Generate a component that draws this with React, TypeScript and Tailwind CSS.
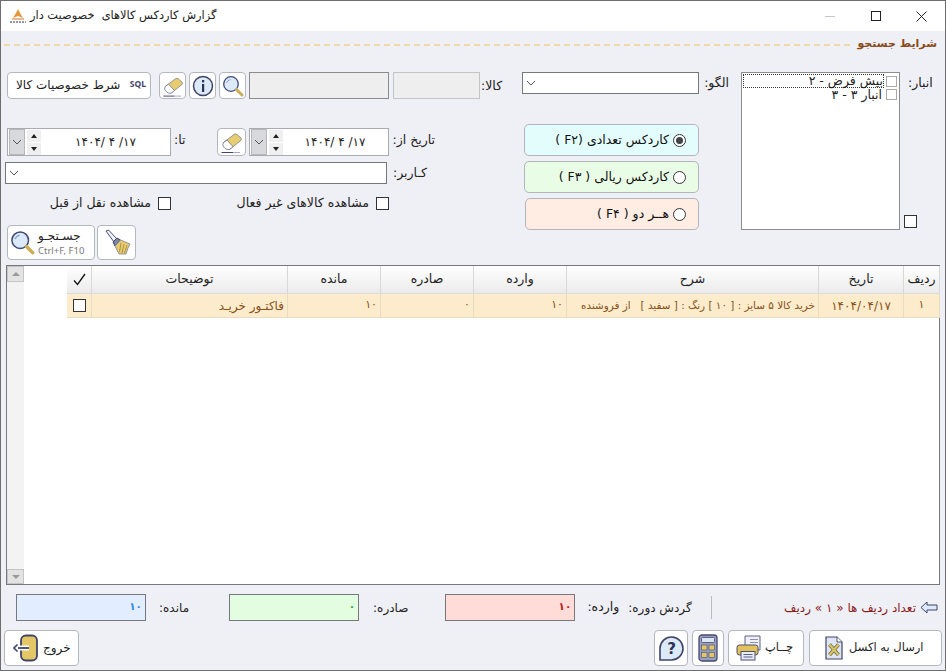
import type { ReactNode } from 'react';

const Eraser = () => (
  <svg width="26" height="24" viewBox="0 0 26 24">
    <path d="M5.500 12.500 L16 4.500 Q17.500 3.500 19 4.500 L23 8 Q24 9.500 22.500 10.800 L11.500 19.500 Z" fill="#e8cc70" stroke="#7a7d96" strokeWidth="0.800" />
    <path d="M5.500 12.500 L9 10 L15 16.700 L11.500 19.500 L9 19.500 Q7 19 5 16 Q4.500 14 5.500 12.500 Z" fill="#fff" stroke="#6b6f8c" strokeWidth="0.800" />
    <path d="M3.500 22.500 H15" stroke="#3f4468" strokeWidth="1" />
    <path d="M15 22.500 H22" stroke="#a5a9c2" strokeWidth="1" />
  </svg>
);

const Magnifier = ({ size = 22 }: { size?: number }) => (
  <svg width={size} height={size} viewBox="0 0 22 22">
    <circle cx="9" cy="9" r="7.300" fill="#dbe9f8" stroke="#3f4a78" strokeWidth="1.300" />
    <path d="M4.500 8 Q5.500 5 8.500 4.500" fill="none" stroke="#8da6c8" strokeWidth="1" />
    <path d="M14.500 14.500 L20 20" stroke="#c9ad57" strokeWidth="3" strokeLinecap="round" />
  </svg>
);

const Brush = () => (
  <svg width="30" height="30" viewBox="0 0 30 30">
    <path d="M4 3 L6.500 2 L15 11 L12 14 Z" fill="#eef1f7" stroke="#4a4f75" strokeWidth="1" />
    <path d="M11 14 L15 10 L18.500 12 L13 18 Z" fill="#7d83a8" stroke="#3f4468" strokeWidth="1" />
    <path d="M13 18 L18.500 12 L28 16 L26 20 L24 26 L17 26 Z" fill="#e8cc70" stroke="#7a7d96" strokeWidth="0.800" />
    <path d="M19 15 L17.500 24 M22 16 L20 25 M25 17 L22.500 25" stroke="#a88f3f" strokeWidth="0.900" />
  </svg>
);

const Exit = () => (
  <svg width="26" height="28" viewBox="0 0 26 28">
    <rect x="8" y="1.500" width="16" height="25" rx="5" fill="#e3c766" stroke="#3f4468" strokeWidth="1.800" />
    <path d="M5 14 H16" stroke="#fff" strokeWidth="5" />
    <path d="M5 14 H16" stroke="#3f4468" strokeWidth="1.800" />
    <path d="M4.500 10.500 L1 14 L4.500 17.500" fill="none" stroke="#3f4468" strokeWidth="1.600" />
  </svg>
);

const Excel = () => (
  <svg width="18" height="24" viewBox="0 0 18 24">
    <path d="M1 1 H12 L17 6 V23 H1 Z" fill="#dfe5f2" stroke="#3f4468" strokeWidth="1.200" />
    <path d="M12 1 V6 H17" fill="#fff" stroke="#3f4468" strokeWidth="0.900" />
    <path d="M4.500 8.500 L13.500 19 M13.500 8.500 L4.500 19" stroke="#6f6a3a" strokeWidth="3.600" />
    <path d="M4.500 8.500 L13.500 19 M13.500 8.500 L4.500 19" stroke="#d8c468" strokeWidth="2.200" />
  </svg>
);

const Printer = () => (
  <svg width="26" height="26" viewBox="0 0 26 26">
    <path d="M9 1 H24 V15 H9 Z" fill="#eef0f6" stroke="#5d6285" strokeWidth="1" />
    <path d="M14 4.500 H22 M14 7.500 H22" stroke="#8d91ad" strokeWidth="1" />
    <rect x="1" y="10" width="21" height="10" rx="2.500" fill="#e3c25a" stroke="#4a4f75" strokeWidth="1" />
    <rect x="5" y="16.500" width="14" height="8.500" fill="#e6ebf5" stroke="#4a4f75" strokeWidth="1" />
    <path d="M7.500 19.500 H16.500 M7.500 22 H16.500" stroke="#5d6285" strokeWidth="1" />
  </svg>
);

const Calc = () => (
  <svg width="20" height="28" viewBox="0 0 20 28">
    <rect x="1" y="1" width="18" height="26" rx="3" fill="#9aa0bf" stroke="#454a70" strokeWidth="1.300" />
    <rect x="3.500" y="3.500" width="13" height="5" rx="1" fill="#dce6f4" stroke="#454a70" strokeWidth="0.800" />
    <rect x="3.500" y="11" width="5.500" height="5" fill="#e3c766" stroke="#454a70" strokeWidth="0.600" />
    <rect x="11" y="11" width="5.500" height="5" fill="#e3c766" stroke="#454a70" strokeWidth="0.600" />
    <rect x="3.500" y="18.500" width="5.500" height="5" fill="#e3c766" stroke="#454a70" strokeWidth="0.600" />
    <rect x="11" y="18.500" width="5.500" height="5" fill="#e3c766" stroke="#454a70" strokeWidth="0.600" />
  </svg>
);

const Help = () => (
  <svg width="27" height="27" viewBox="0 0 27 27">
    <path d="M2 25 V13 A11.500 11.500 0 1 1 13.500 25 Z" fill="#dbe9f8" stroke="#3f4468" strokeWidth="1.600" />
    <text x="13.500" y="19" textAnchor="middle" fontSize="15" fontWeight="700" fill="#2d3157">?</text>
  </svg>
);

const Chevron = () => (
  <svg width="10" height="6" viewBox="0 0 10 6">
    <path d="M1 1 L5 5 L9 1" fill="none" stroke="#555" strokeWidth="1" />
  </svg>
);

const Check = ({ className = '' }: { className?: string }) => (
  <span className={`block w-[13px] h-[13px] border border-[#333] bg-white shrink-0 ${className}`} />
);

const IconBtn = ({ children, className = 'w-[27px] h-[27px]' }: { children: ReactNode; className?: string }) => (
  <button className={`flex items-center justify-center bg-white border border-[#b5b7bf] rounded-[4px] shrink-0 ${className}`}>
    {children}
  </button>
);

const DateBox = ({ className }: { className: string }) => (
  <div className={`flex items-center bg-white border border-[#a9abb3] h-[28px] ${className}`}>
    <span className="w-[16px] h-[26px] ml-px bg-[#d8d9dc] border border-[#b8b8b8] flex items-center justify-center shrink-0"><Chevron /></span>
    <span className="flex flex-col w-[14px] ml-[2px] shrink-0 gap-px">
      <span className="h-[12px] bg-[#efefef] flex items-center justify-center"><span className="block border-x-[3px] border-x-transparent border-b-[4px] border-b-[#222]" /></span>
      <span className="h-[12px] bg-[#efefef] flex items-center justify-center"><span className="block border-x-[3px] border-x-transparent border-t-[4px] border-t-[#222]" /></span>
    </span>
    <span className="flex-1 text-center text-[12px] text-[#222] tracking-[2.600px] whitespace-pre">۱۴۰۴/ ۴ /۱۷</span>
  </div>
);

const Radio = ({ label, on, className }: { label: string; on?: boolean; className: string }) => (
  <div className={`h-[32px] flex items-center justify-end pr-[12px] border border-[#b3b5bc] rounded-[5px] ${className}`}>
    <span dir="rtl" className="text-[12.500px] text-[#111] whitespace-pre">{label}</span>
    <span className="w-[13px] h-[13px] rounded-full border border-[#333] bg-white flex items-center justify-center ml-[4px]">
      {on && <span className="block w-[7px] h-[7px] rounded-full bg-[#444]" />}
    </span>
  </div>
);

const columns = [
  { w: 'w-[25px]', label: '✓' },
  { w: 'w-[196px]', label: 'توضیحات' },
  { w: 'w-[93px]', label: 'مانده' },
  { w: 'w-[93px]', label: 'صادره' },
  { w: 'w-[93px]', label: 'وارده' },
  { w: 'w-[252px]', label: 'شرح' },
  { w: 'w-[85px]', label: 'تاریخ' },
  { w: 'w-[36px]', label: 'ردیف' },
];

const Cell = ({ w, children, center, size = 'text-[11px]' }: { w: string; children?: ReactNode; center?: boolean; size?: string }) => (
  <div dir="rtl" className={`${w} shrink-0 h-full border-r border-[#e6dcc4] flex items-center px-[3px] text-[#85501c] whitespace-pre ${size} ${center ? 'justify-center' : 'justify-start'}`}>
    {children}
  </div>
);

const Stat = ({ className, color, value }: { className: string; color: string; value: string }) => (
  <div className={`w-[130px] h-[27px] border border-[#77787d] flex items-center justify-end pr-[3px] pb-[2px] text-[10.500px] font-bold ${className} ${color}`}>
    {value}
  </div>
);

export default function App() {
  return (
    <div className="w-[946px] h-[671px] bg-[#eff0f6] border border-[#6e6e6e] overflow-hidden flex flex-col text-[#222] font-['DejaVu_Sans',sans-serif]">
      {/* title bar */}
      <div className="h-[30px] bg-white flex items-center shrink-0">
        <svg width="18" height="16" viewBox="0 0 18 16" className="ml-[8px]">
          <path d="M4 10 L7 5 L9 1 L11 5 L14 10 L9 8 Z" fill="#e8963a" />
          <path d="M3 11 H15" stroke="#d2702a" strokeWidth="1" />
          <path d="M1 14 H17" stroke="#778" strokeWidth="1.500" strokeDasharray="2 1" />
        </svg>
        <span dir="rtl" className="ml-[3px] text-[11.400px] text-[#222] whitespace-pre">گزارش کاردکس کالاهای  خصوصیت دار</span>
        <div className="ml-auto flex items-center">
          <span className="block w-[10px] h-px bg-[#c8c8c8] mr-[36px]" />
          <span className="block w-[10px] h-[10px] border border-[#222] mr-[35px]" />
          <svg width="11" height="11" viewBox="0 0 11 11" className="mr-[18px]"><path d="M0.500 0.500 L10.500 10.500 M10.500 0.500 L0.500 10.500" stroke="#222" strokeWidth="1" /></svg>
        </div>
      </div>

      {/* section header */}
      <div className="h-[26px] flex items-center pl-[3px] pr-[8px] shrink-0">
        <div className="flex-1 h-[2px] mt-[1px] bg-[repeating-linear-gradient(90deg,#f0d9a8_0,#f0d9a8_6px,transparent_6px,transparent_10px)]" />
        <span dir="rtl" className="ml-[3px] text-[11px] font-bold text-[#8a4b1a]">شرایط جستجو</span>
      </div>

      {/* search form */}
      <div className="flex h-[208px] shrink-0 pt-[15px]">
        {/* left block */}
        <div className="w-[504px] pl-[6px] shrink-0 flex flex-col">
          <div className="flex items-start h-[28px]">
            <button className="w-[144px] h-[27px] bg-white border border-[#b5b7bf] rounded-[4px] flex items-center justify-between pl-[8px] pr-[4px] pb-[2px]">
              <span dir="rtl" className="text-[12px] text-[#222] whitespace-pre">شرط خصوصیات کالا</span>
              <span className="text-[8.500px] font-bold text-[#3f4468] font-['Noto_Sans',sans-serif]">SQL</span>
            </button>
            <IconBtn className="w-[27px] h-[27px] ml-[8px]"><Eraser /></IconBtn>
            <IconBtn className="w-[27px] h-[27px] ml-[3px]">
              <svg width="22" height="22" viewBox="0 0 22 22">
                <circle cx="11" cy="11" r="9.500" fill="#dbe9f8" stroke="#3f4468" strokeWidth="1.500" />
                <rect x="10" y="9" width="2.200" height="8" fill="#2d3157" />
                <rect x="10" y="5" width="2.200" height="2.400" fill="#2d3157" />
              </svg>
            </IconBtn>
            <IconBtn className="w-[27px] h-[27px] ml-[3px]"><Magnifier /></IconBtn>
            <div className="w-[140px] h-[27px] ml-[3px] bg-[#eeeeee] border border-[#8c8c8c]" />
            <div className="w-[87px] h-[27px] ml-[4px] bg-[#eeeeee] border border-[#c4c4c4]" />
            <span dir="rtl" className="ml-[1px] self-center text-[12.500px] text-[#222]">کالا:</span>
          </div>

          <div className="flex items-center h-[28px] mt-[28px]">
            <DateBox className="w-[164px]" />
            <span dir="rtl" className="ml-[3px] text-[12.500px] text-[#222] -mt-[3px]">تا:</span>
            <IconBtn className="w-[29px] h-[28px] ml-[31px]"><Eraser /></IconBtn>
            <DateBox className="w-[140px] ml-[3px]" />
            <span dir="rtl" className="ml-[4px] text-[12.500px] text-[#222] -mt-[3px]">تاریخ از:</span>
          </div>

          <div className="flex items-center h-[22px] mt-[6px]">
            <div className="w-[382px] -ml-[2px] h-[22px] bg-white border border-[#77787d] flex items-center pl-[3px]"><Chevron /></div>
            <span dir="rtl" className="ml-[6px] text-[12.500px] text-[#222]">کـاربر:</span>
          </div>

          <div className="flex items-center h-[15px] mt-[12px]">
            <span dir="rtl" className="w-[100px] ml-[44px] text-[12.500px] text-[#222] whitespace-pre">مشاهده نقل از قبل</span>
            <Check className="ml-[7px]" />
            <span dir="rtl" className="w-[134px] ml-[64px] text-[12.500px] text-[#222] whitespace-pre">مشاهده کالاهای غیر فعال</span>
            <Check className="ml-[7px]" />
          </div>

          <div className="flex items-center h-[35px] mt-[14px]">
            <button className="w-[88px] h-[35px] bg-white border border-[#b5b7bf] rounded-[4px] flex items-center pl-[2px]">
              <Magnifier size={25} />
              <span className="flex flex-col items-start ml-[3px]">
                <span dir="rtl" className="text-[12px] leading-[15px] text-[#222]">جسـتجـو</span>
                <span className="text-[9.500px] leading-[13px] text-[#777] whitespace-pre font-['Noto_Sans',sans-serif]">Ctrl+F, F10</span>
              </span>
            </button>
            <IconBtn className="w-[39px] h-[35px] ml-[2px]"><Brush /></IconBtn>
          </div>
        </div>

        {/* output type column */}
        <div className="w-[224px] pl-[16px] shrink-0 flex flex-col">
          <div className="flex items-center h-[22px]">
            <div className="w-[179px] h-[22px] ml-[1px] bg-white border border-[#77787d] flex items-center pl-[3px]"><Chevron /></div>
            <span dir="rtl" className="ml-[5px] text-[12.500px] text-[#222]">الگو:</span>
          </div>
          <div className="flex flex-col mt-[30px] gap-[5px] w-[175px] ml-[3px]">
            <Radio className="bg-[#e3fdfd]" on label="کاردکس تعدادی (F۲ )" />
            <Radio className="bg-[#e9fde6]" label="کاردکس ریالی ( F۳ )" />
            <Radio className="bg-[#ffece3] ml-[1px]" label="هــر دو ( F۴ )" />
          </div>
        </div>

        {/* warehouse column */}
        <div className="flex items-start pl-[12px]">
          <div className="w-[159px] h-[158px] bg-white border border-[#8c8c8c] pl-px pt-px">
            <div className="h-[14px] flex items-center">
              <div className="flex-1 h-[14px] border border-dotted border-[#333] flex items-center justify-end">
                <span dir="rtl" className="text-[12.500px] leading-[12px] text-[#222] whitespace-pre">بیش فرض - ۲</span>
              </div>
              <span className="block w-[11px] h-[11px] border border-[#aaa] ml-[2px] mr-[2px] shrink-0" />
            </div>
            <div className="h-[13px] flex items-center justify-end">
              <span dir="rtl" className="text-[12.500px] leading-[12px] text-[#222] whitespace-pre">انبار ۳ - ۳</span>
              <span className="block w-[11px] h-[11px] border border-[#aaa] ml-[4px] mr-[2px] shrink-0" />
            </div>
          </div>
          <div className="flex flex-col ml-[4px] h-[158px] justify-between">
            <span dir="rtl" className="ml-[4px] text-[12.500px] text-[#222] mt-[2px]">انبار:</span>
            <Check className="mb-[2px]" />
          </div>
        </div>
      </div>

      {/* grid */}
      <div className="mx-[5px] h-[320px] shrink-0 bg-white border border-[#77787d] flex">
        <div className="w-[17px] shrink-0 bg-[#f3f3f3] flex flex-col justify-between">
          <div className="h-[16px] bg-[#e3e3e3] border border-[#c4c4c4] flex items-center justify-center"><span className="block border-x-[4px] border-x-transparent border-b-[4px] border-b-[#9a9a9a]" /></div>
          <div className="h-[15px] bg-[#e3e3e3] border border-[#c4c4c4] flex items-center justify-center"><span className="block border-x-[4px] border-x-transparent border-t-[4px] border-t-[#9a9a9a]" /></div>
        </div>
        <div className="flex-1 pl-[43px]">
          <div className="flex h-[28px] bg-gradient-to-b from-white to-[#ebebeb] border-b border-[#dcdcdc]">
            {columns.map((c) => (
              <div key={c.label} dir="rtl" className={`${c.w} shrink-0 border-r border-[#d8d8d8] flex items-center justify-center text-[12.500px] text-[#222]`}>
                {c.label === '✓' ? (
                  <svg width="13" height="13" viewBox="0 0 13 13"><path d="M1 7.500 L4.500 11.500 L12 1" fill="none" stroke="#111" strokeWidth="1.300" /></svg>
                ) : c.label}
              </div>
            ))}
          </div>
          <div className="flex h-[24px] bg-[#fdeccb] border-b border-[#e6dcc4]">
            <Cell w="w-[25px]" center><Check /></Cell>
            <Cell w="w-[196px]" size="text-[12px]">فاکتـور خریـد</Cell>
            <Cell w="w-[93px]">۱۰</Cell>
            <Cell w="w-[93px]">۰</Cell>
            <Cell w="w-[93px]">۱۰</Cell>
            <Cell w="w-[252px]" size="text-[10.400px]">خرید کالا ۵ سایز : [ ۱۰ ] رنگ : [ سفید ]   از فروشنده</Cell>
            <Cell w="w-[85px]" center size="text-[12px]">۱۴۰۴/۰۴/۱۷</Cell>
            <Cell w="w-[36px]" center>۱</Cell>
          </div>
        </div>
      </div>

      {/* totals */}
      <div className="h-[27px] mt-[9px] flex items-center pl-[15px] shrink-0">
        <Stat className="bg-[#e2eeff]" color="text-[#2f8be6]" value="۱۰" />
        <span dir="rtl" className="ml-[13px] text-[12px] text-[#222]">مانده:</span>
        <Stat className="ml-[40px] bg-[#e3fde0]" color="text-[#2e9e35]" value="۰" />
        <span dir="rtl" className="ml-[14px] text-[12px] text-[#222]">صادره:</span>
        <Stat className="ml-[37px] bg-[#ffdcd8]" color="text-[#c01818]" value="۱۰" />
        <span dir="rtl" className="ml-[12px] text-[12.500px] text-[#222]">وارده:</span>
        <span dir="rtl" className="ml-[9px] text-[12px] text-[#222] whitespace-pre">گردش دوره:</span>
        <span className="block w-px h-[23px] bg-[#bbb] ml-[19px]" />
        <span dir="rtl" className="ml-auto text-[12px] text-[#8b1a1a] whitespace-pre">تعداد ردیف ها « ۱ » ردیف</span>
        <svg width="18" height="13" viewBox="0 0 18 13" className="ml-[4px] mr-[7px]">
          <path d="M1 6.500 L7 1 V4 H17 V9 H7 V12 Z" fill="#dbe9f8" stroke="#3f4468" strokeWidth="1" />
        </svg>
      </div>

      {/* bottom buttons */}
      <div className="flex items-center pl-[3px] mt-[9px] h-[36px] shrink-0">
        <button className="w-[75px] h-[36px] bg-white border border-[#b5b7bf] rounded-[4px] flex items-center pl-[8px] gap-[4px]">
          <Exit />
          <span dir="rtl" className="text-[12px] text-[#222]">خروج</span>
        </button>
        <IconBtn className="w-[34px] h-[36px] ml-auto"><Help /></IconBtn>
        <IconBtn className="w-[32px] h-[36px] ml-[4px]"><Calc /></IconBtn>
        <button className="w-[76px] h-[36px] ml-[4px] bg-white border border-[#b5b7bf] rounded-[4px] flex items-center pl-[7px] gap-[3px]">
          <Printer />
          <span dir="rtl" className="text-[11.500px] text-[#222]">چــاپ</span>
        </button>
        <button className="w-[133px] h-[36px] ml-[5px] mr-[3px] bg-white border border-[#b5b7bf] rounded-[4px] flex items-center pl-[15px] gap-[6px]">
          <Excel />
          <span dir="rtl" className="text-[11.500px] text-[#222] whitespace-pre">ارسال به اکسل</span>
        </button>
      </div>
    </div>
  );
}
